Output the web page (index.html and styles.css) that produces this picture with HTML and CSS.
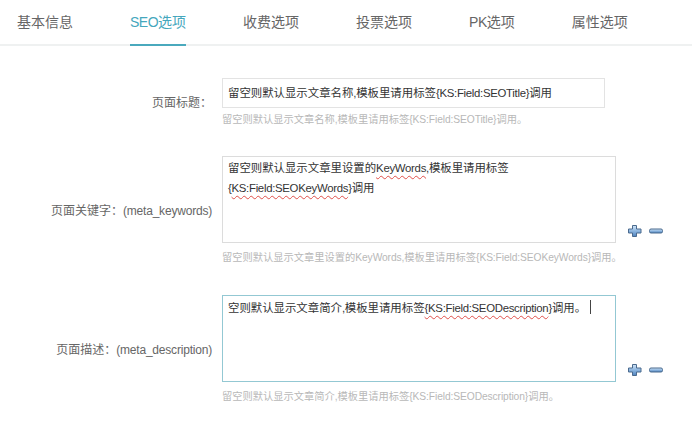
FILE: index.html
```html
<!DOCTYPE html>
<html lang="zh-CN">
<head>
<meta charset="utf-8">
<title>SEO选项</title>
<link rel="stylesheet" href="styles.css">
</head>
<body>
<div class="tabs">
  <a class="tab">基本信息</a>
  <a class="tab active"><span class="en">SEO</span>选项</a>
  <a class="tab">收费选项</a>
  <a class="tab">投票选项</a>
  <a class="tab"><span class="en">PK</span>选项</a>
  <a class="tab">属性选项</a>
</div>
<div class="form">
  <div class="row">
    <div class="label">页面标题：</div>
    <div class="ctrl">
      <div class="field-line">
        <div class="box input">留空则默认显示文章名称<span class="en">,</span>模板里请用标签<span class="en">{KS:Field:SEOTitle}</span>调用</div>
      </div>
      <div class="help help-input">留空则默认显示文章名称<span class="en">,</span>模板里请用标签<span class="en">{KS:Field:SEOTitle}</span>调用。</div>
    </div>
  </div>
  <div class="row">
    <div class="label">页面关键字：<span class="en">(meta_keywords)</span></div>
    <div class="ctrl">
      <div class="field-line">
        <div class="box area">留空则默认显示文章里设置的<span class="en sp">KeyWords</span><span class="en">,</span>模板里请用标签<br><span class="en">{<span class="sp">KS:Field:SEOKeyWords</span>}</span>调用</div>
        <div class="ops">
          <svg class="plus" width="14" height="12" viewBox="0 0 14 12"><defs><linearGradient id="g1" x1="0" y1="0" x2="0" y2="1"><stop offset="0" stop-color="#d4e6f7"/><stop offset="0.5" stop-color="#8db6e0"/><stop offset="1" stop-color="#4f82bd"/></linearGradient></defs><path d="M4.5 0.5h4v3.5h4.5v4h-4.5v3.5h-4v-3.5h-4v-4h4z" fill="url(#g1)" stroke="#4a6a8e" stroke-width="1" stroke-linejoin="round"/></svg>
          <svg class="minus" width="14" height="12" viewBox="0 0 14 12"><defs><linearGradient id="g2" x1="0" y1="0" x2="0" y2="1"><stop offset="0" stop-color="#d4e6f7"/><stop offset="0.5" stop-color="#8db6e0"/><stop offset="1" stop-color="#4f82bd"/></linearGradient></defs><rect x="0.5" y="4" width="13" height="4" rx="1.5" fill="url(#g2)" stroke="#4a6a8e" stroke-width="1"/></svg>
        </div>
      </div>
      <div class="help">留空则默认显示文章里设置的<span class="en">KeyWords,</span>模板里请用标签<span class="en">{KS:Field:SEOKeyWords}</span>调用。</div>
    </div>
  </div>
  <div class="row">
    <div class="label">页面描述：<span class="en">(meta_description)</span></div>
    <div class="ctrl">
      <div class="field-line">
        <div class="box area focus">空则默认显示文章简介<span class="en">,</span>模板里请用标签<span class="en"><span class="sp">{KS:Field:SEODescription</span>}</span>调用。<span class="caret"></span></div>
        <div class="ops">
          <svg class="plus" width="14" height="12" viewBox="0 0 14 12"><defs><linearGradient id="g3" x1="0" y1="0" x2="0" y2="1"><stop offset="0" stop-color="#d4e6f7"/><stop offset="0.5" stop-color="#8db6e0"/><stop offset="1" stop-color="#4f82bd"/></linearGradient></defs><path d="M4.5 0.5h4v3.5h4.5v4h-4.5v3.5h-4v-3.5h-4v-4h4z" fill="url(#g3)" stroke="#4a6a8e" stroke-width="1" stroke-linejoin="round"/></svg>
          <svg class="minus" width="14" height="12" viewBox="0 0 14 12"><defs><linearGradient id="g4" x1="0" y1="0" x2="0" y2="1"><stop offset="0" stop-color="#d4e6f7"/><stop offset="0.5" stop-color="#8db6e0"/><stop offset="1" stop-color="#4f82bd"/></linearGradient></defs><rect x="0.5" y="4" width="13" height="4" rx="1.5" fill="url(#g4)" stroke="#4a6a8e" stroke-width="1"/></svg>
        </div>
      </div>
      <div class="help">留空则默认显示文章简介<span class="en">,</span>模板里请用标签<span class="en">{KS:Field:SEODescription}</span>调用。</div>
    </div>
  </div>
</div>
</body>
</html>
```

FILE: styles.css
```css
* { box-sizing: border-box; }
html, body { margin: 0; padding: 0; background: #fff; }
body {
  font-family: "Liberation Sans", "Noto Sans CJK SC", sans-serif;
  color: #333;
  font-size: 12px;
}
.tabs {
  display: flex;
  gap: 57px;
  padding-left: 17px;
  height: 46px;
  border-bottom: 2px solid #eff1f1;
}
.tab {
  display: block;
  font-size: 14px;
  line-height: 44px;
  height: 46px;
  color: #666;
  white-space: nowrap;
}
.tab .en { letter-spacing: -0.5px; }
.tab.active {
  color: #45a7bd;
  border-bottom: 2px solid #4aa9bd;
}
.form {
  padding-top: 32px;
  display: flex;
  flex-direction: column;
  gap: 29px;
}
.row {
  display: flex;
  align-items: center;
  gap: 10px;
}
.row:last-child { margin-top: 1px; }
.label {
  width: 212px;
  text-align: right;
  color: #666;
  font-size: 12px;
  line-height: 16px;
  white-space: nowrap;
}
.label .en { letter-spacing: -0.2px; }
.ctrl {
  display: flex;
  flex-direction: column;
}
.field-line {
  display: flex;
  align-items: flex-end;
}
.box {
  border: 1px solid #e3e3e3;
  padding: 1px 5px;
  font-size: 11.4px;
  color: #333;
  white-space: nowrap;
}
.box .en { letter-spacing: -0.3px; }
.input {
  width: 383px;
  height: 30px;
  line-height: 28px;
  padding-top: 0;
  padding-bottom: 0;
}
.area {
  width: 394px;
  height: 87px;
  line-height: 20px;
  border-color: #dcdcdc;
}
.area.focus { border-color: #93c8d3; padding-top: 2px; }
.sp {
  text-decoration: underline wavy #e0504a;
  text-decoration-thickness: 1px;
  text-underline-offset: 3px;
}
.caret {
  display: inline-block;
  width: 1px;
  height: 14px;
  background: #444;
  margin-left: 4px;
  vertical-align: -2px;
}
.ops {
  display: flex;
  gap: 7px;
  margin-left: 12px;
  margin-bottom: 6px;
}
.plus, .minus { display: block; }
.help {
  margin-top: 8px;
  font-size: 10.25px;
  line-height: 14px;
  color: #b8b8b8;
  white-space: nowrap;
}
.help .en { letter-spacing: -0.1px; }
.help-input { margin-top: 5px; }
```
